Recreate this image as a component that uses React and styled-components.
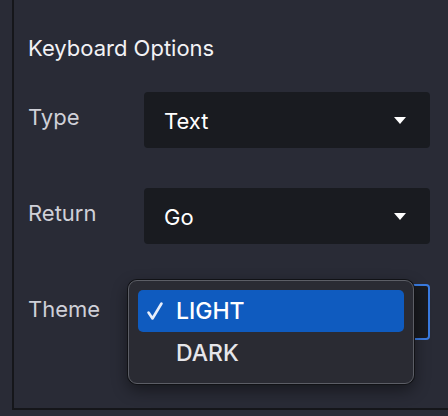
import React from "react";
import styled, { createGlobalStyle } from "styled-components";

const Global = createGlobalStyle`
  html, body { margin: 0; padding: 0; background: #292b36; }
  body { font-family: Inter, "Noto Sans", sans-serif; color: #fff; }
  * { box-sizing: border-box; }
`;

const Page = styled.div`
  width: 448px;
  height: 416px;
  background: #292b36;
  padding-left: 12px;
  overflow: hidden;
`;

const Panel = styled.div`
  height: 410px;
  border-left: 2px solid #15161a;
  border-bottom: 2px solid #15161a;
  padding: 34px 18px 0 14px;
`;

const Title = styled.div`
  font-size: 22px;
  line-height: 28px;
  color: #f2f2f5;
  margin-bottom: 30px;
`;

const Rows = styled.div`
  display: flex;
  flex-direction: column;
  gap: 40px;
`;

const Row = styled.div`
  display: grid;
  grid-template-columns: 116px 1fr;
  align-items: start;
`;

const Label = styled.div`
  font-size: 22px;
  line-height: 28px;
  color: #cfd0d8;
  padding-top: 11px;
`;

const Field = styled.div`
  position: relative;
`;

const Select = styled.div`
  height: 56px;
  background: #191b20;
  border-radius: 4px;
  display: flex;
  align-items: center;
  justify-content: space-between;
  padding: 0 24px 0 20px;
  font-size: 22px;
  color: #fff;
  border: ${(p) => (p.$focused ? "2px solid #3a7be0" : "none")};
`;

const Value = styled.span`
  padding-top: 2px;
`;

const Caret = styled.span`
  width: 0;
  height: 0;
  border-left: 6px solid transparent;
  border-right: 6px solid transparent;
  border-top: 7px solid #fff;
`;

const Menu = styled.div`
  position: absolute;
  left: -16px;
  top: -4px;
  width: 286px;
  height: 104px;
  background: #2a2b33;
  border: 1px solid #5c5e66;
  border-radius: 9px;
  box-shadow: 0 0 0 1px #111216, 0 6px 16px rgba(0, 0, 0, 0.45);
  padding: 9px;
  display: flex;
  flex-direction: column;
`;

const Option = styled.div`
  height: 42px;
  border-radius: 5px;
  display: flex;
  align-items: center;
  background: ${(p) => (p.$active ? "#0f5bbf" : "transparent")};
  font-size: 23px;
  font-weight: 500;
  color: ${(p) => (p.$active ? "#fff" : "#e6e6ea")};
`;

const Check = styled.span`
  width: 38px;
  display: flex;
  justify-content: flex-start;
  padding-left: 8px;
`;

function SelectBox({ value }) {
  return (
    <Select>
      <Value>{value}</Value>
      <Caret />
    </Select>
  );
}

export default function App() {
  return (
    <Page>
      <Global />
      <Panel>
        <Title>Keyboard Options</Title>
        <Rows>
          <Row>
            <Label>Type</Label>
            <SelectBox value="Text" />
          </Row>
          <Row>
            <Label>Return</Label>
            <SelectBox value="Go" />
          </Row>
          <Row>
            <Label>Theme</Label>
            <Field>
              <Select $focused />
              <Menu>
                <Option $active>
                  <Check>
                    <svg width="18" height="20" viewBox="0 0 18 20">
                      <path d="M2.5 11.5 L6.5 17.5 L15.5 2.5" fill="none" stroke="#e8eefa" strokeWidth="2.6" strokeLinecap="round" strokeLinejoin="round" />
                    </svg>
                  </Check>
                  LIGHT
                </Option>
                <Option>
                  <Check />
                  DARK
                </Option>
              </Menu>
            </Field>
          </Row>
        </Rows>
      </Panel>
    </Page>
  );
}
